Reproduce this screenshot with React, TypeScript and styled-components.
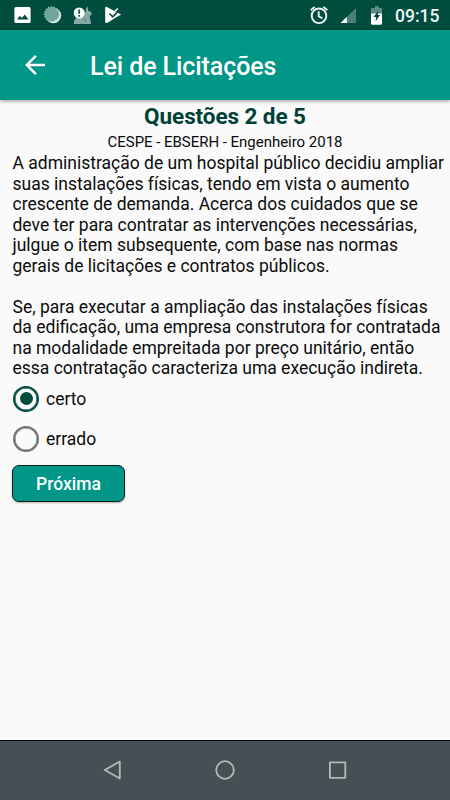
import React, { useState } from 'react';
import styled, { createGlobalStyle } from 'styled-components';

const GlobalStyle = createGlobalStyle`
  *, *::before, *::after { box-sizing: border-box; }
  body { margin: 0; background: #fafafa; font-family: Roboto, sans-serif; }
`;

const Screen = styled.div`
  display: flex;
  flex-direction: column;
  width: 450px;
  height: 800px;
  overflow: hidden;
  background: #fafafa;
  color: #0c0c0c;
`;

const StatusBar = styled.div`
  display: flex;
  flex: none;
  justify-content: space-between;
  height: 30px;
  background: #004d40;
`;

const StatusIcons = styled.svg`
  display: block;
  flex: none;
`;

const StatusRight = styled.div`
  display: flex;
`;

const Clock = styled.span`
  width: 55px;
  font-size: 17.5px;
  font-weight: 500;
  line-height: 32px;
  color: #f1f6f5;
  white-space: nowrap;
`;

const AppBar = styled.header`
  display: flex;
  flex: none;
  align-items: center;
  height: 70px;
  padding-left: 20px;
  background: #009688;
  color: #fff;
  box-shadow: 0 1px 4px rgba(0, 0, 0, 0.4);
`;

const BackButton = styled.button`
  display: flex;
  width: 30px;
  height: 30px;
  padding: 0;
  border: 0;
  background: none;
  color: inherit;
`;

const Title = styled.h1`
  margin: 4px 0 0 40px;
  font-size: 25px;
  font-weight: 500;
  letter-spacing: -0.08px;
  line-height: 30px;
  white-space: nowrap;
`;

const Content = styled.main`
  display: flex;
  flex: 1;
  flex-direction: column;
  align-items: flex-start;
  padding: 3px 0 0 12.5px;
`;

const Progress = styled.h2`
  align-self: stretch;
  margin: 0 12.5px 0 0;
  font-size: 22.5px;
  font-weight: 700;
  letter-spacing: -0.08px;
  line-height: 27px;
  text-align: center;
  color: #004135;
`;

const Source = styled.p`
  align-self: stretch;
  margin: 2px 12.5px 0 0;
  font-size: 15px;
  letter-spacing: -0.03px;
  line-height: 20px;
  text-align: center;
`;

const Question = styled.p`
  margin: 1px 0 0;
  font-size: 17.5px;
  line-height: 20.5px;
  white-space: pre;
`;

const Options = styled.div`
  display: flex;
  flex-direction: column;
`;

const Option = styled.label`
  display: flex;
  align-items: center;
  gap: 7px;
  height: 40px;
  font-size: 17.5px;
`;

const Radio = styled.input`
  display: grid;
  place-items: center;
  width: 26px;
  height: 26px;
  margin: 0 0 0 0.5px;
  appearance: none;
  border: 2px solid #737373;
  border-radius: 50%;
  box-shadow: inset 0 0 0 0.5px #737373;

  &:checked {
    border-color: #004d40;
    box-shadow: inset 0 0 0 0.5px #004d40;
  }
  &:checked::before {
    width: 13px;
    height: 13px;
    border-radius: 50%;
    background: #004d40;
    content: '';
  }
`;

const NextButton = styled.button`
  width: 113px;
  height: 37px;
  margin: 6px 0 0 -0.5px;
  padding: 2px 0 0;
  border: 1px solid #06201d;
  border-radius: 7px;
  background: #009688;
  box-shadow: 0 1px 2px rgba(0, 0, 0, 0.3);
  font: 500 17.5px/33px Roboto, sans-serif;
  color: #fff;
`;

const NavBar = styled.nav`
  display: flex;
  flex: none;
  justify-content: center;
  gap: 82.5px;
  height: 60px;
  border-top: 1px solid #000;
  background: #455055;
`;

const NavButton = styled.button`
  display: grid;
  place-items: center;
  width: 30px;
  height: 58px;
  padding: 0;
  border: 0;
  background: none;
  color: #b3b8ba;
`;

const questionText = `A administração de um hospital público decidiu ampliar
suas instalações físicas, tendo em vista o aumento
crescente de demanda. Acerca dos cuidados que se
deve ter para contratar as intervenções necessárias,
julgue o item subsequente, com base nas normas
gerais de licitações e contratos públicos.

Se, para executar a ampliação das instalações físicas
da edificação, uma empresa construtora for contratada
na modalidade empreitada por preço unitário, então
essa contratação caracteriza uma execução indireta.`;

const options = ['certo', 'errado'];

function NotificationIcons() {
  return (
    <StatusIcons width="130" height="30" viewBox="0 0 130 30">
      <path fill="#fff" fillRule="evenodd" d="M16 7h13a1.6 1.6 0 0 1 1.6 1.6v12.8A1.6 1.6 0 0 1 29 23H16a1.6 1.6 0 0 1-1.6-1.6V8.6A1.6 1.6 0 0 1 16 7ZM17 19.5h11.5l-3.8-5-2.8 3.6-2-2.4Z" />
      <circle cx="53.4" cy="15.5" r="7.8" fill="#dce9e6" />
      <circle cx="51.7" cy="14.2" r="7.2" fill="#71a49a" stroke="#8db5ad" strokeWidth="1.4" strokeDasharray="1.5 1.2" />
      <path fill="#86aaa4" d="M74 24v-3.5l3-3h5.5l1.5-3 1.3-1.2 1-5.3 1.3-1.8.7 4.8 2.7.5-.5 2.2h-1.2l.5 3.3 1.4 7Z" />
      <path fill="#86aaa4" d="M84 12.500h7.500v3H84Z" />
      <path d="m84.5 17.5 1.5 4.5" stroke="#4d8178" fill="none" />
      <circle cx="79.2" cy="13" r="5.5" fill="#fff" />
      <path d="M79.2 9.500v4.300m0 1.300v1.600" stroke="#174c43" strokeWidth="1.7" />
      <path fill="#fff" d="M105.200 8Q105.400 6.200 107.300 7.200L121 14.600 107 23Q105.200 23.500 105.200 21.800Z" />
      <path d="m109.500 13.500 3.300 3.300 6.200-6.500" fill="none" stroke="#17483f" strokeWidth="1.700" />
      <path d="m115 11.300 2.800-2.800" fill="none" stroke="#fff" strokeWidth="1.400" />
    </StatusIcons>
  );
}

function SystemIcons() {
  return (
    <StatusIcons width="85" height="30" viewBox="310 0 85 30">
      <g fill="none" stroke="#edf4f2" strokeWidth="1.9">
        <circle cx="319" cy="15.8" r="7.3" />
        <path d="M318.700 11.200v5l3.700 2.200M310.700 10.300l4-3.400m8.600 0 4 3.400" />
      </g>
      <path d="M356 8v15h-15.500Z" fill="#4c8076" />
      <path d="M346.800 17v6h-6.300Z" fill="#fff" />
      <path d="M373 8h2V6.300h4V8h3v7h-11V8Z" fill="#5b8c83" />
      <path d="M371 13.500h11v9.700a1.500 1.500 0 0 1-1.500 1.500h-8a1.500 1.500 0 0 1-1.500-1.500Z" fill="#fff" />
      <path d="m378.500 10.500-5 6.500h2.800l-.8 4.500 4.500-6.500h-2.500Z" fill="#003e34" />
    </StatusIcons>
  );
}

export default function App() {
  const [answer, setAnswer] = useState('certo');

  return (
    <>
      <GlobalStyle />
      <Screen>
        <StatusBar>
          <NotificationIcons />
          <StatusRight>
            <SystemIcons />
            <Clock>09:15</Clock>
          </StatusRight>
        </StatusBar>
        <AppBar>
          <BackButton aria-label="Voltar">
            <svg width="30" height="30" viewBox="0 0 24 24" fill="currentColor">
              <path d="M20 11H7.830l5.590-5.590L12 4l-8 8 8 8 1.410-1.410L7.830 13H20v-2z" />
            </svg>
          </BackButton>
          <Title>Lei de Licitações</Title>
        </AppBar>
        <Content>
          <Progress>Questões 2 de 5</Progress>
          <Source>CESPE - EBSERH - Engenheiro 2018</Source>
          <Question>{questionText}</Question>
          <Options role="radiogroup">
            {options.map((option) => (
              <Option key={option}>
                <Radio
                  type="radio"
                  name="answer"
                  checked={answer === option}
                  onChange={() => setAnswer(option)}
                />
                {option}
              </Option>
            ))}
          </Options>
          <NextButton>Próxima</NextButton>
        </Content>
        <NavBar>
          <NavButton aria-label="Voltar">
            <svg width="30" height="30" fill="none" stroke="currentColor" strokeWidth="1.8" strokeLinejoin="round">
              <path d="M21.800 6.500v17L6.800 15Z" />
            </svg>
          </NavButton>
          <NavButton aria-label="Início">
            <svg width="30" height="30" fill="none" stroke="currentColor" strokeWidth="1.8">
              <circle cx="15" cy="15" r="8.8" />
            </svg>
          </NavButton>
          <NavButton aria-label="Recentes">
            <svg width="30" height="30" fill="none" stroke="currentColor" strokeWidth="1.8" strokeLinejoin="round">
              <rect x="6.9" y="7.4" width="15.4" height="15.4" />
            </svg>
          </NavButton>
        </NavBar>
      </Screen>
    </>
  );
}
